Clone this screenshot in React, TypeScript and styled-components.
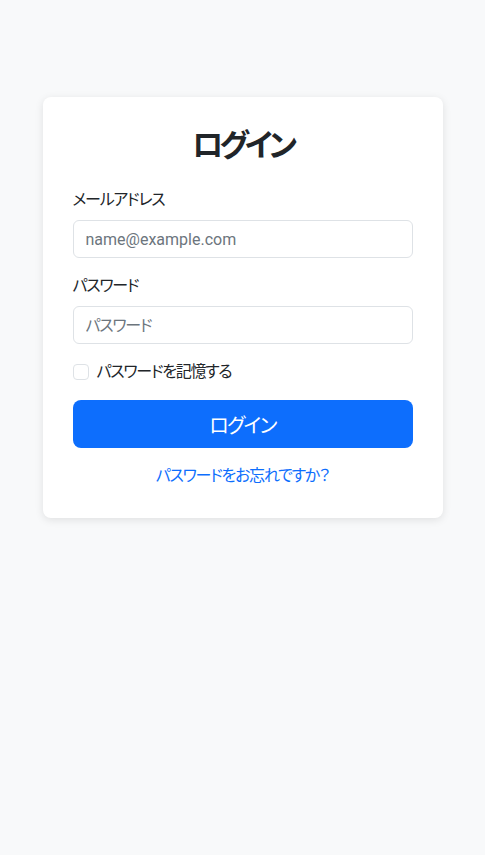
import React from "react";
import styled, { createGlobalStyle } from "styled-components";

const GlobalStyle = createGlobalStyle`
  * {
    box-sizing: border-box;
  }
  body {
    margin: 0;
    background: #f8f9fa;
    color: #212529;
    font-family: "Roboto", "Noto Sans CJK JP", sans-serif;
    font-size: 16px;
    line-height: 1.5;
    font-feature-settings: "palt";
    letter-spacing: -0.08em;
  }
`;

const Page = styled.div`
  min-height: 855px;
  padding-top: 97px;
  display: flex;
  justify-content: center;
  align-items: flex-start;
`;

const Card = styled.div`
  width: 400px;
  background: #ffffff;
  border-radius: 8px;
  box-shadow: 0 2px 8px rgba(0, 0, 0, 0.1);
  padding: 30px;
  display: flex;
  flex-direction: column;
`;

const Title = styled.h2`
  margin: 0 0 24px;
  font-size: 31px;
  line-height: 37px;
  font-weight: 700;
  letter-spacing: -0.13em;
  text-align: center;
`;

const Field = styled.div`
  margin-bottom: 16px;
  display: flex;
  flex-direction: column;
`;

const Label = styled.label`
  margin-bottom: 8px;
  font-size: 16px;
  line-height: 24px;
`;

const Input = styled.input<{ $latin?: boolean }>`
  height: 38px;
  width: 100%;
  padding: 6px 12px;
  border: 1px solid #dee2e6;
  border-radius: 6px;
  font-family: inherit;
  font-feature-settings: "palt";
  font-size: 16px;
  letter-spacing: ${(props) => (props.$latin ? "0" : "-0.08em")};
  color: #212529;
  outline: none;
  &::placeholder {
    color: #6c757d;
  }
`;

const CheckRow = styled.label`
  display: flex;
  align-items: center;
  gap: 8px;
  height: 24px;
  margin-bottom: 16px;
  font-size: 16px;
`;

const CheckBox = styled.span`
  width: 16px;
  height: 16px;
  border: 1px solid #dee2e6;
  border-radius: 4px;
  background: #fff;
  flex-shrink: 0;
`;

const SubmitButton = styled.button`
  height: 48px;
  width: 100%;
  border: none;
  border-radius: 8px;
  background: #0d6efd;
  color: #fff;
  font-family: inherit;
  font-feature-settings: "palt";
  font-size: 20px;
  letter-spacing: -0.08em;
  cursor: pointer;
`;

const ForgotLink = styled.a`
  margin-top: 16px;
  text-align: center;
  color: #0d6efd;
  text-decoration: none;
  line-height: 24px;
`;

const App = (): JSX.Element => {
  const [email, setEmail] = React.useState("");
  const [password, setPassword] = React.useState("");

  return (
    <React.Fragment>
      <GlobalStyle />
      <Page>
        <Card>
          <Title>ログイン</Title>
          <Field>
            <Label>メールアドレス</Label>
            <Input
              $latin
              type="email"
              placeholder="name@example.com"
              value={email}
              onChange={(event) => setEmail(event.target.value)}
            />
          </Field>
          <Field>
            <Label>パスワード</Label>
            <Input
              type="password"
              placeholder="パスワード"
              value={password}
              onChange={(event) => setPassword(event.target.value)}
            />
          </Field>
          <CheckRow>
            <CheckBox />
            パスワードを記憶する
          </CheckRow>
          <SubmitButton>ログイン</SubmitButton>
          <ForgotLink href="#">パスワードをお忘れですか？</ForgotLink>
        </Card>
      </Page>
    </React.Fragment>
  );
};

export default App;
